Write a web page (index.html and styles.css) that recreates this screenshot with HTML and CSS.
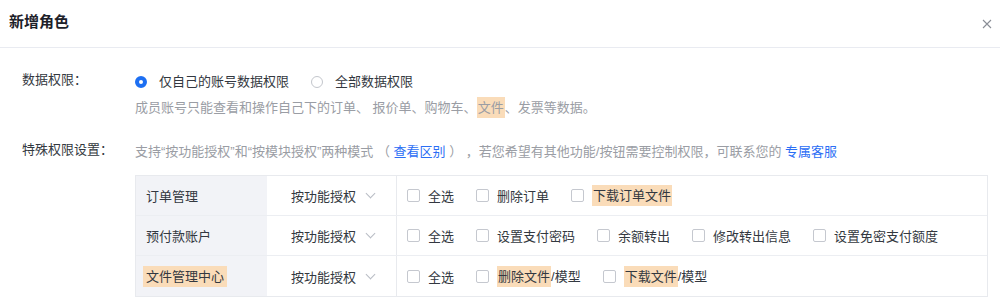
FILE: index.html
```html
<!DOCTYPE html>
<html lang="zh-CN">
<head>
    <meta charset="UTF-8">
    <title>新增角色</title>
    <link rel="stylesheet" href="styles.css">
</head>
<body>
    <div class="dialog">
        <div class="dialog-header">
            <h2>新增角色</h2>
            <svg class="close" width="10" height="10" viewBox="0 0 10 10">
                <path d="M1 1L9 9M9 1L1 9" stroke="#8a8e96" stroke-width="1.1" fill="none"/>
            </svg>
        </div>
        <div class="dialog-body">
            <div class="form-row">
                <div class="form-label">数据权限：</div>
                <div class="form-content">
                    <div class="radio-group">
                        <label class="radio checked"><span class="radio-dot"></span>仅自己的账号数据权限</label>
                        <label class="radio"><span class="radio-dot"></span>全部数据权限</label>
                    </div>
                    <div class="tip">成员账号只能查看和操作自己下的订单、 报价单、购物车、<span class="mark">文件</span>、发票等数据。</div>
                </div>
            </div>
            <div class="form-row special">
                <div class="form-label">特殊权限设置：</div>
                <div class="form-content">
                    <div class="tip">支持“按功能授权”和“按模块授权”两种模式 （ <a href="#">查看区别</a> ） ，若您希望有其他功能/按钮需要控制权限，可联系您的 <a href="#">专属客服</a></div>
                </div>
            </div>
            <div class="perm-table">
                <div class="perm-row">
                    <div class="perm-name">订单管理</div>
                    <div class="perm-mode">按功能授权<span class="arrow"></span></div>
                    <div class="perm-items">
                        <label class="check"><span class="box"></span><span>全选</span></label>
                        <label class="check"><span class="box"></span><span>删除订单</span></label>
                        <label class="check"><span class="box"></span><span><span class="mark">下载订单文件</span></span></label>
                    </div>
                </div>
                <div class="perm-row">
                    <div class="perm-name">预付款账户</div>
                    <div class="perm-mode">按功能授权<span class="arrow"></span></div>
                    <div class="perm-items">
                        <label class="check"><span class="box"></span><span>全选</span></label>
                        <label class="check"><span class="box"></span><span>设置支付密码</span></label>
                        <label class="check"><span class="box"></span><span>余额转出</span></label>
                        <label class="check"><span class="box"></span><span>修改转出信息</span></label>
                        <label class="check"><span class="box"></span><span>设置免密支付额度</span></label>
                    </div>
                </div>
                <div class="perm-row">
                    <div class="perm-name"><span class="mark pad">文件管理中心</span></div>
                    <div class="perm-mode">按功能授权<span class="arrow"></span></div>
                    <div class="perm-items">
                        <label class="check"><span class="box"></span><span>全选</span></label>
                        <label class="check"><span class="box"></span><span><span class="mark">删除文件</span>/模型</span></label>
                        <label class="check"><span class="box"></span><span><span class="mark">下载文件</span>/模型</span></label>
                    </div>
                </div>
            </div>
        </div>
    </div>
</body>
</html>
```

FILE: styles.css
```css
body {
    margin: 0;
    background: #fff;
    font-family: "Liberation Sans", "Noto Sans CJK SC", sans-serif;
    font-size: 13px;
    color: #333840;
}
.dialog-header {
    height: 48px;
    box-sizing: border-box;
    border-bottom: 1px solid #e9ebf1;
    display: flex;
    justify-content: space-between;
    padding: 11px 8px 0 9px;
}
.dialog-header h2 {
    margin: 0;
    font-size: 15px;
    line-height: 22px;
    font-weight: bold;
    color: #1d2129;
}
.close {
    margin-top: 8px;
}
.dialog-body {
    padding: 24px 12px 0 22px;
}
.form-row {
    display: flex;
    line-height: 20px;
}
.form-row.special {
    margin-top: 24px;
}
.form-label {
    width: 113px;
    flex-shrink: 0;
    margin-top: -2px;
}
.radio-group {
    display: flex;
    gap: 22px;
}
.radio {
    display: flex;
    align-items: center;
    gap: 12px;
}
.radio-dot {
    width: 10px;
    height: 10px;
    border: 1px solid #c3c6cc;
    border-radius: 50%;
    background: #fff;
    box-sizing: content-box;
}
.radio.checked .radio-dot {
    width: 4px;
    height: 4px;
    border: 4px solid #1d6ff2;
}
.tip {
    color: #9a9da4;
}
.form-row:first-child .tip {
    margin-top: 5px;
}
.tip a {
    color: #2b6ef5;
    text-decoration: none;
}
.mark {
    background: #fadcb9;
    display: inline-block;
    line-height: 21px;
    padding: 0 1px;
}
.mark.pad {
    padding: 0 3px;
}
.perm-table {
    margin: 13px 0 0 113px;
    border: 1px solid #e8eaee;
}
.perm-row {
    display: grid;
    grid-template-columns: 131px 130px 1fr;
    height: 40px;
    box-sizing: border-box;
    border-bottom: 1px solid #eceef2;
}
.perm-row:last-child {
    border-bottom: none;
}
.perm-name {
    background: #f2f3f7;
    display: flex;
    align-items: center;
    padding-left: 10px;
}
.perm-row:last-child .perm-name {
    padding-left: 7px;
}
.perm-mode {
    display: flex;
    align-items: center;
    padding-left: 24px;
    border-right: 1px solid #e8eaee;
}
.arrow {
    width: 6px;
    height: 6px;
    border-right: 1px solid #b8bcc4;
    border-bottom: 1px solid #b8bcc4;
    transform: rotate(45deg);
    margin: -4px 0 0 11px;
}
.perm-items {
    display: flex;
    align-items: center;
    padding-left: 10px;
    gap: 22px;
}
.check {
    display: flex;
    align-items: center;
    gap: 8px;
}
.box {
    width: 11px;
    height: 11px;
    border: 1px solid #c5c8cf;
    border-radius: 2px;
    background: #fff;
}
```
